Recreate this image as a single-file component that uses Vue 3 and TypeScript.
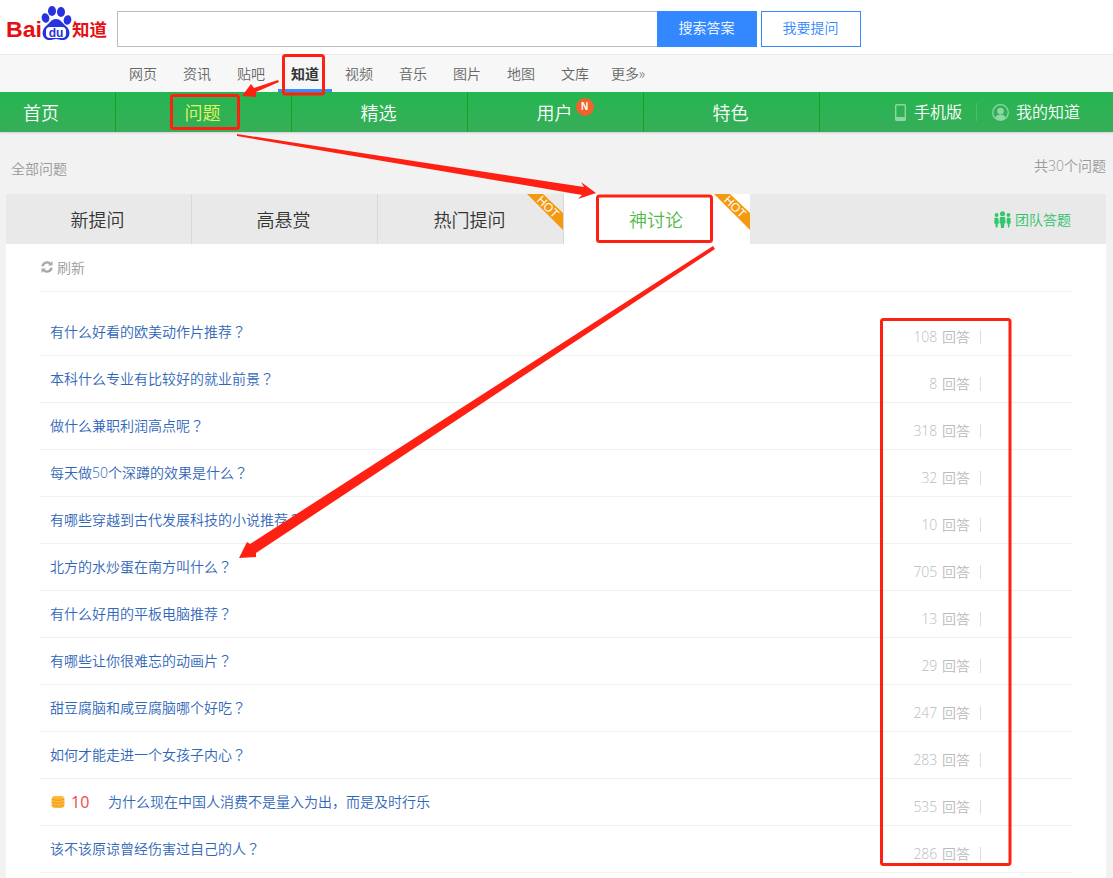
<script setup lang="ts">
interface Question {
  title: string
  answers: number
  reward?: number
  mark?: boolean
}

const webLinks: string[] = ['网页', '资讯', '贴吧', '知道', '视频', '音乐', '图片', '地图', '文库']
const mainLinks: string[] = ['问题', '精选', '用户', '特色']
const tabs: { label: string; hot: boolean; active: boolean }[] = [
  { label: '新提问', hot: false, active: false },
  { label: '高悬赏', hot: false, active: false },
  { label: '热门提问', hot: true, active: false },
  { label: '神讨论', hot: true, active: true },
]
const questions: Question[] = [
  { title: '有什么好看的欧美动作片推荐', answers: 108, mark: true },
  { title: '本科什么专业有比较好的就业前景', answers: 8, mark: true },
  { title: '做什么兼职利润高点呢', answers: 318, mark: true },
  { title: '每天做50个深蹲的效果是什么', answers: 32, mark: true },
  { title: '有哪些穿越到古代发展科技的小说推荐', answers: 10, mark: true },
  { title: '北方的水炒蛋在南方叫什么', answers: 705, mark: true },
  { title: '有什么好用的平板电脑推荐', answers: 13, mark: true },
  { title: '有哪些让你很难忘的动画片', answers: 29, mark: true },
  { title: '甜豆腐脑和咸豆腐脑哪个好吃', answers: 247, mark: true },
  { title: '如何才能走进一个女孩子内心', answers: 283, mark: true },
  { title: '为什么现在中国人消费不是量入为出，而是及时行乐', answers: 535, reward: 10 },
  { title: '该不该原谅曾经伤害过自己的人', answers: 286, mark: true },
]
</script>

<template>
  <div class="page">
    <header class="top">
      <svg class="logo" width="117" height="54" viewBox="0 0 117 54">
        <text x="6" y="37" class="logo-bai" textLength="36" lengthAdjust="spacingAndGlyphs">Bai</text>
        <ellipse cx="45.500" cy="18" rx="3.800" ry="4.800" fill="#2932e1" transform="rotate(-15 45.500 18)" />
        <ellipse cx="52" cy="11" rx="4" ry="5" fill="#2932e1" />
        <ellipse cx="61" cy="12" rx="4" ry="5" fill="#2932e1" />
        <ellipse cx="67.500" cy="20" rx="3.800" ry="4.800" fill="#2932e1" transform="rotate(15 67.500 20)" />
        <path d="M56 19c5 0 7 5 11 8 4 4 3 12-3 13-3 .5-6-1-8-1s-5 1.500-8 1c-6-1-7-9-3-13 4-3 6-8 11-8z" fill="#2932e1" />
        <rect x="46" y="27" width="20" height="11" rx="4" fill="#fff" />
        <text x="56" y="37" text-anchor="middle" class="logo-du">du</text>
        <text x="72" y="36" class="logo-zhi">知道</text>
      </svg>
      <input class="search" type="text" aria-label="搜索" />
      <button class="btn-search" type="button">搜索答案</button>
      <button class="btn-ask" type="button">我要提问</button>
    </header>

    <nav class="web-nav">
      <a v-for="link in webLinks" :key="link" :class="['web-link', { on: link === '知道' }]">{{ link }}</a>
      <a class="web-link more">更多»</a>
    </nav>

    <nav class="main-nav">
      <a class="main-first">首页</a>
      <a v-for="link in mainLinks" :key="link" :class="['main-link', { on: link === '问题' }]">
        <span class="main-label">
          {{ link }}
          <i v-if="link === '用户'" class="badge">N</i>
        </span>
      </a>
      <div class="main-right">
        <svg class="phone" width="11" height="17" viewBox="0 0 11 17">
          <rect x="0.700" y="0.700" width="9.600" height="15.600" rx="1" fill="none" stroke="#8fd6a5" stroke-width="1.400" />
          <rect x="0.700" y="13" width="9.600" height="3.300" fill="#8fd6a5" />
        </svg>
        <span class="right-text">手机版</span>
        <i class="right-sep"></i>
        <svg class="person" width="17" height="17" viewBox="0 0 17 17">
          <circle cx="8.500" cy="8.500" r="7.800" fill="none" stroke="#8fd6a5" stroke-width="1.300" />
          <circle cx="8.500" cy="7" r="3.300" fill="#8fd6a5" />
          <path d="M3.200 14c1-2.800 3-3.500 5.300-3.500s4.300.7 5.300 3.500a7.500 7.500 0 0 1-10.600 0z" fill="#8fd6a5" />
        </svg>
        <span class="right-text">我的知道</span>
      </div>
    </nav>

    <div class="crumbs">
      <span class="crumb-left">全部问题</span>
      <span class="crumb-right">共30个问题</span>
    </div>

    <div class="tabs">
      <a v-for="tab in tabs" :key="tab.label" :class="['tab', { active: tab.active }]">
        {{ tab.label }}
        <svg v-if="tab.hot" class="hot" width="36" height="36" viewBox="0 0 36 36">
          <polygon points="0,0 16,0 36,19 36,36" fill="#f5990f" />
          <text x="21" y="17" text-anchor="middle" transform="rotate(45 21 13)" class="hot-text">HOT</text>
        </svg>
      </a>
      <a class="team">
        <svg width="17" height="17" viewBox="0 0 17 17" fill="#2ec76c">
          <circle cx="8.500" cy="2.800" r="2.500" />
          <path d="M6 6h5l.6 6-1.200.5-.4 4.500H7l-.4-4.500-1.200-.500z" />
          <circle cx="2.600" cy="4" r="1.900" />
          <path d="M.6 6.800h3.600l.6 5.500-1 .5-.3 3.700H1.700l-.3-3.700-1.200-.5z" />
          <circle cx="14.400" cy="4" r="1.900" />
          <path d="M12.800 6.800h3.600l.4 5.500-1.200.5-.3 3.700h-1.300l-.3-3.700-1-.5z" />
        </svg>
        <span>团队答题</span>
      </a>
    </div>

    <main class="content">
      <div class="refresh">
        <svg width="12" height="12" viewBox="0 0 12 12" fill="none" stroke="#a8a8a8" stroke-width="2.400">
          <path d="M1.500 5.200A4.600 4.600 0 0 1 9.500 3" />
          <path d="M10.500 6.800A4.600 4.600 0 0 1 2.500 9" />
          <path d="M11.500 0v4.500H7z" fill="#a8a8a8" stroke="none" />
          <path d="M.5 12V7.500H5z" fill="#a8a8a8" stroke="none" />
        </svg>
        <span>刷新</span>
      </div>
      <ul class="list">
        <li v-for="q in questions" :key="q.title" class="row">
          <span v-if="q.reward" class="reward">
            <svg width="14" height="14" viewBox="0 0 14 14">
              <rect x="0.500" y="1" width="13" height="12" rx="3.500" fill="#fdb93a" />
              <path d="M1 4.500q6 1.800 12 0M1 7.500q6 1.800 12 0M1 10.300q6 1.800 12 0" fill="none" stroke="#f09a1a" stroke-width="1" />
            </svg>
            <b>{{ q.reward }}</b>
          </span>
          <a class="q-title">{{ q.title }}<span v-if="q.mark" class="mark">？</span></a>
          <span class="count">{{ q.answers }} 回答</span>
        </li>
      </ul>
    </main>

    <svg class="marks" width="1113" height="878" viewBox="0 0 1113 878" aria-hidden="true">
      <g fill="none" stroke="#ff2014" stroke-width="3" stroke-linejoin="round">
        <rect x="283.500" y="55.500" width="40" height="38.500" rx="2" />
        <rect x="171.500" y="95.500" width="67" height="33" rx="2" />
        <rect x="597.500" y="196" width="114" height="45.500" rx="2" />
        <rect x="881.500" y="319.500" width="128.500" height="545" rx="2" />
      </g>
      <g fill="#ff2014">
        <polygon points="278,80 279,82 256,92 256,97 242,96 251,84 254,88" />
        <polygon points="237,134 584,187 581,182 596,193 578,199 582,195 237,136" />
        <polygon points="715,249 713,246 250,544 247,542 239,558 256,557 256,553" />
      </g>
    </svg>
  </div>
</template>

<style>
html,
body {
  margin: 0;
  background: #f1f1f1;
}
</style>

<style scoped>
.page {
  position: relative;
  width: 1113px;
  height: 878px;
  overflow: hidden;
  background: #f2f2f2;
  font-family: "Open Sans", "Noto Sans CJK SC", sans-serif;
  font-size: 14px;
  font-weight: 350;
  color: #333;
}
a {
  text-decoration: none;
}
.top {
  display: flex;
  align-items: flex-start;
  height: 54px;
  background: #fff;
  border-bottom: 1px solid #e8e8e8;
}
.logo {
  flex: none;
  display: block;
}
.logo-bai {
  font-family: "Liberation Sans", sans-serif;
  font-size: 22px;
  font-weight: 700;
  fill: #e60f14;
}
.logo-du {
  font-family: "Liberation Sans", sans-serif;
  font-size: 12px;
  font-weight: 700;
  fill: #2932e1;
}
.logo-zhi {
  font-family: "Noto Sans CJK SC", sans-serif;
  font-size: 17.500px;
  font-weight: 700;
  fill: #e60f14;
}
.search {
  width: 540px;
  height: 36px;
  margin-top: 11px;
  box-sizing: border-box;
  border: 1px solid #bbb;
  border-right: 0;
  padding: 0;
  background: #fff;
  outline: none;
}
.btn-search,
.btn-ask {
  height: 36px;
  margin-top: 11px;
  box-sizing: border-box;
  font: inherit;
  font-size: 14px;
  padding: 0 1px 4px 0;
  border-radius: 0;
}
.btn-search {
  width: 100px;
  border: 0;
  background: #3388ff;
  color: #fff;
}
.btn-ask {
  width: 100px;
  margin-left: 4px;
  border: 1px solid #3388ff;
  background: #fff;
  color: #3388ff;
}
.web-nav {
  display: flex;
  align-items: center;
  gap: 26px;
  height: 37px;
  padding-left: 129px;
  background: #f7f7f7;
}
.web-link {
  position: relative;
  color: #666;
  line-height: 37px;
}
.web-link.on {
  color: #333;
  font-weight: 700;
}
.web-link.on::after {
  content: "";
  position: absolute;
  left: -13px;
  right: -13px;
  bottom: 0;
  height: 3px;
  background: #3b8cff;
}
.web-link.more {
  margin-left: -4px;
}
.main-nav {
  display: flex;
  height: 40px;
  background: linear-gradient(#25b650, #37ad59);
  box-shadow: 0 1px 2px rgba(0, 0, 0, 0.15);
  color: #fff;
  font-size: 18px;
  line-height: 42px;
  position: relative;
}
.main-first {
  width: 92px;
  padding-left: 23px;
  color: #fff;
}
.main-link {
  width: 176px;
  box-sizing: border-box;
  padding-right: 2px;
  border-left: 1px solid #10a81a;
  text-align: center;
  color: #fff;
}
.main-link:nth-of-type(5) {
  width: 177px;
  border-right: 1px solid #10a81a;
}
.main-link.on {
  color: #e9f75c;
}
.main-label {
  position: relative;
  display: inline-block;
}
.badge {
  position: absolute;
  left: 39px;
  top: 6px;
  width: 18px;
  height: 18px;
  border-radius: 50%;
  background: #ef632c;
  color: #fff;
  font-family: "Liberation Sans", sans-serif;
  font-size: 10px;
  font-weight: 700;
  font-style: normal;
  line-height: 18px;
  text-align: center;
}
.main-right {
  display: flex;
  align-items: center;
  margin-left: auto;
  padding-right: 33px;
  font-size: 16px;
}
.phone {
  margin-right: 8px;
}
.right-text {
  color: #fff;
}
.right-sep {
  width: 1px;
  height: 18px;
  margin: 0 15px 0 14px;
  background: #4cbd6c;
}
.person {
  margin-right: 7px;
}
.crumbs {
  display: flex;
  justify-content: space-between;
  align-items: flex-start;
  height: 62px;
  padding: 0 7px 0 11px;
  color: #999;
  line-height: 20px;
}
.crumb-left {
  margin-top: 27px;
}
.crumb-right {
  margin-top: 24px;
}
.tabs {
  display: flex;
  height: 50px;
  margin: 0 7px 0 6px;
  background: #e9e9e9;
}
.tab {
  position: relative;
  width: 186px;
  box-sizing: border-box;
  padding-right: 2px;
  border-right: 1px solid #d9d9d9;
  color: #333;
  font-size: 18px;
  line-height: 52px;
  text-align: center;
}
.tab.active {
  border-right: 0;
  background: #fff;
  color: #52b848;
}
.hot {
  position: absolute;
  right: 0;
  top: 0;
  overflow: visible;
}
.hot-text {
  font-family: "Liberation Sans", sans-serif;
  font-size: 12px;
  font-weight: 400;
  fill: #fff;
}
.team {
  display: flex;
  align-items: center;
  gap: 4px;
  margin-left: auto;
  padding-right: 35px;
  color: #2fc36b;
}
.content {
  margin: 0 7px 0 6px;
  padding: 0 34px;
  background: #fff;
  height: 634px;
}
.refresh {
  display: flex;
  align-items: center;
  gap: 4px;
  height: 45px;
  padding-bottom: 2px;
  padding-left: 1px;
  border-bottom: 1px solid #f1f1f1;
  color: #999;
}
.list {
  list-style: none;
  margin: 0;
  padding: 17px 0 0;
}
.row {
  display: flex;
  align-items: center;
  height: 46px;
  padding-left: 10px;
  border-bottom: 1px solid #f0f0f0;
}
.reward {
  display: flex;
  align-items: center;
  width: 57px;
  margin-left: 1px;
  flex: none;
}
.reward b {
  margin-left: 6px;
  color: #f04848;
  font-size: 16px;
  font-weight: 400;
}
.q-title {
  flex: 1;
  margin-bottom: 2px;
  color: #2f66b8;
}
.mark {
  font-family: "Noto Sans CJK TC", sans-serif;
}
.count {
  margin-top: 9px;
  margin-right: 91px;
  padding-right: 10px;
  border-right: 1px solid #ddd;
  color: #bbb;
  line-height: 14px;
  word-spacing: 1px;
}
.marks {
  position: absolute;
  left: 0;
  top: 0;
  pointer-events: none;
}
</style>
